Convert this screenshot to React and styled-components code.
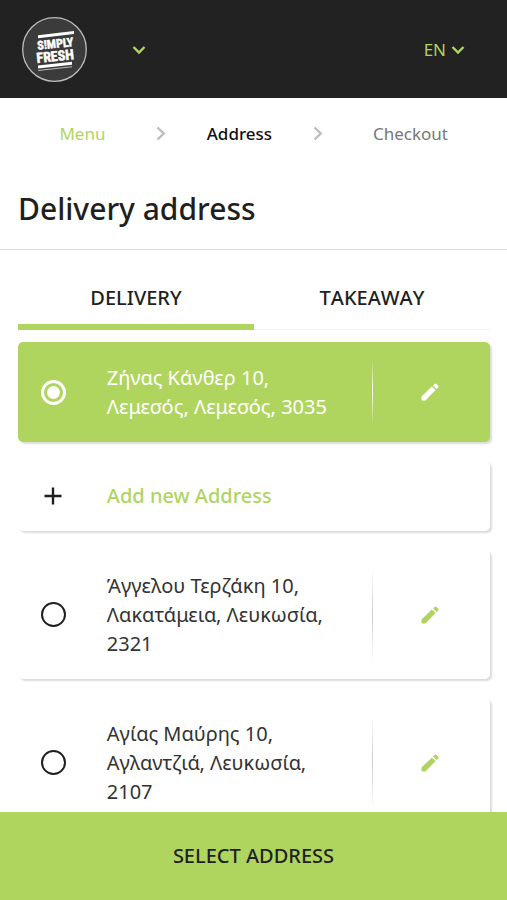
import React, { useState } from "react";
import styled, { createGlobalStyle } from "styled-components";

const green = "#b0d55f";
const ink = "#1f1f1f";

const GlobalStyle = createGlobalStyle`
  *, *::before, *::after { box-sizing: border-box; }
  body {
    margin: 0;
    background: #fff;
    color: ${ink};
    font-family: "Noto Sans", "Open Sans", sans-serif;
  }
  button, input { font: inherit; }
`;

const Page = styled.div`
  display: flex;
  flex-direction: column;
  height: 100vh;
`;

const Header = styled.header`
  display: flex;
  align-items: center;
  flex: none;
  padding: 17px 42px 16px 22px;
  background: #222;
`;

const HomeLink = styled.a`
  display: flex;
  margin-right: 45px;
`;

const HeaderButton = styled.button`
  display: flex;
  align-items: center;
  gap: 5px;
  padding: 0;
  border: 0;
  background: none;
  color: ${green};
  font-size: 17px;
  line-height: 24px;
  cursor: pointer;
`;

const Language = styled(HeaderButton)`
  margin-left: auto;
`;

const Steps = styled.nav`
  display: grid;
  grid-template-columns: 1fr 16px 1fr 16px 1.2fr;
  align-items: center;
  justify-items: center;
  flex: none;
  padding: 24px 12px 23px;
  font-size: 17px;
  line-height: 24px;
`;

const Step = styled.a`
  color: ${(p) => p.$color};
  font-weight: ${(p) => (p.$current ? 500 : 400)};
  text-decoration: none;
`;

const Title = styled.h1`
  flex: none;
  margin: 0;
  padding: 19px 18px 20px;
  border-bottom: 1px solid #ddd;
  font-size: 30px;
  font-weight: 500;
  line-height: 41px;
`;

const Content = styled.main`
  flex: 1;
  min-height: 0;
  padding: 17px 17px 18px 18px;
  overflow-y: auto;
  scrollbar-width: none;
`;

const Tabs = styled.div`
  display: grid;
  grid-template-columns: 1fr 1fr;
  margin-bottom: 12px;
  border-bottom: 1px solid #f1f1f1;
`;

const Tab = styled.button`
  margin-bottom: -1px;
  padding: 17px 0 12px;
  border: 0;
  border-bottom: 6px solid ${(p) => (p.$active ? green : "transparent")};
  background: none;
  color: ${ink};
  font-size: 20px;
  font-weight: 500;
  font-kerning: none;
  line-height: 28px;
  cursor: pointer;
`;

const List = styled.div`
  display: grid;
  gap: 19px;
`;

const Card = styled.div`
  display: grid;
  grid-template-columns: 15% 60% 25%;
  align-items: center;
  border-radius: 5px;
  background: ${(p) => (p.$selected ? green : "#fff")};
  color: ${(p) => (p.$selected ? "#fff" : "#333")};
  box-shadow: 2px 2px 2px rgba(0, 0, 0, 0.14);
`;

const AddCard = styled(Card).attrs({ as: "button", type: "button" })`
  width: 100%;
  padding: 20px 0;
  border: 0;
  color: ${green};
  text-align: left;
  cursor: pointer;
`;

const AddIcon = styled.svg`
  justify-self: center;
  color: ${ink};
`;

const AddLabel = styled.span`
  padding-left: 18px;
  font-size: 20px;
  font-weight: 500;
  line-height: 30px;
`;

const Radio = styled.input`
  display: grid;
  place-items: center;
  justify-self: center;
  width: 25px;
  height: 25px;
  margin: 0;
  appearance: none;
  border: 2px solid ${ink};
  border-radius: 50%;
  cursor: pointer;

  &:checked { border: 3px solid #fff; }
  &:checked::before {
    content: "";
    width: 13px;
    height: 13px;
    border-radius: 50%;
    background: #fff;
  }
`;

const AddressLabel = styled.label`
  padding: 21px 28px 21px 18px;
  font-size: 20px;
  line-height: 29px;
  cursor: pointer;
`;

const EditCell = styled.div`
  display: flex;
  align-self: stretch;
  padding: 18px 0;
`;

const Divider = styled.span`
  width: 1px;
  background: linear-gradient(
    transparent,
    ${(p) => (p.$selected ? "#fff" : "#ccc")} 50%,
    transparent
  );
`;

const EditButton = styled.button`
  display: flex;
  flex: 1;
  align-items: center;
  justify-content: center;
  padding: 0 3px 0 0;
  border: 0;
  background: none;
  color: ${(p) => (p.$selected ? "#fff" : green)};
  cursor: pointer;
`;

const Submit = styled.button`
  flex: none;
  padding: 30px 0;
  border: 0;
  background: ${green};
  color: ${ink};
  font-size: 20px;
  font-weight: 500;
  line-height: 28px;
  cursor: pointer;
`;

const LogoText = styled.text`
  font-family: "Roboto Condensed", "Liberation Sans", sans-serif;
  font-size: ${(p) => p.$size}px;
  font-weight: 700;
`;

const Logo = () => (
  <svg width="65" height="65" viewBox="0 0 65 65" role="img" aria-label="Simply Fresh">
    <circle cx="32.5" cy="32.5" r="31.8" fill="#3c3b3c" stroke="#bdbdbd" strokeWidth="1.3" />
    <g fill="#fff">
      <path d="M16 18.2 52 14v3L16 21.2z" />
      <path d="M16 48.5 50 44.7v3L16 51.5z" />
      <path d="M16 53 50 49.2v1L16 54z" opacity="0.65" />
      <g transform="rotate(-6 33 33)" textAnchor="middle" stroke="#fff" strokeWidth="0.5">
        <LogoText $size={12} x="34" y="31">S!MPLY</LogoText>
        <LogoText $size={14} x="32.5" y="44">FRESH</LogoText>
      </g>
    </g>
  </svg>
);

const Chevron = () => (
  <svg width="14" height="10" viewBox="0 0 14 10" fill="none" stroke="currentColor" strokeWidth="2.4" aria-hidden="true">
    <path d="M1.5 2 7 7.5 12.5 2" />
  </svg>
);

const Separator = () => (
  <svg width="10" height="16" viewBox="0 0 10 16" fill="none" stroke="#bdbdbd" strokeWidth="2.4" aria-hidden="true">
    <path d="M1.5 1.5 7.8 7.5 1.5 13.5" />
  </svg>
);

const Pencil = () => (
  <svg width="18" height="18" viewBox="0 0 18 18" fill="currentColor" aria-hidden="true">
    <path d="M.5 13.6 10.9 3.4l3.7 3.7L4.4 17.4H1.4a.9.9 0 0 1-.9-.9z" />
    <path d="m12 2.5 1.6-1.5a1.3 1.3 0 0 1 1.8 0l1.8 1.8a1.2 1.2 0 0 1 0 1.7l-1.6 1.6z" />
  </svg>
);

const addresses = [
  { id: "zinas", street: "Ζήνας Κάνθερ 10,", area: "Λεμεσός, Λεμεσός, 3035" },
  { id: "angelou", street: "Άγγελου Τερζάκη 10,", area: "Λακατάμεια, Λευκωσία, 2321" },
  { id: "agias", street: "Αγίας Μαύρης 10,", area: "Αγλαντζιά, Λευκωσία, 2107" },
];

const AddressCard = ({ address, selected, onSelect }) => (
  <Card $selected={selected}>
    <Radio type="radio" name="address" id={address.id} checked={selected} onChange={onSelect} />
    <AddressLabel htmlFor={address.id}>
      {address.street}
      <br />
      {address.area}
    </AddressLabel>
    <EditCell>
      <Divider $selected={selected} />
      <EditButton type="button" aria-label="Edit address" $selected={selected}>
        <Pencil />
      </EditButton>
    </EditCell>
  </Card>
);

export default function App() {
  const [selected, setSelected] = useState("zinas");
  const [tab, setTab] = useState("DELIVERY");
  const card = (a) => (
    <AddressCard key={a.id} address={a} selected={selected === a.id} onSelect={() => setSelected(a.id)} />
  );

  return (
    <Page>
      <GlobalStyle />
      <Header>
        <HomeLink href="#home">
          <Logo />
        </HomeLink>
        <HeaderButton type="button" aria-label="Choose store">
          <Chevron />
        </HeaderButton>
        <Language type="button">
          EN
          <Chevron />
        </Language>
      </Header>
      <Steps aria-label="Order steps">
        <Step href="#menu" $color={green}>Menu</Step>
        <Separator />
        <Step href="#address" $color="#111" $current aria-current="step">Address</Step>
        <Separator />
        <Step href="#checkout" $color="#777">Checkout</Step>
      </Steps>
      <Title>Delivery address</Title>
      <Content>
        <Tabs role="tablist">
          {["DELIVERY", "TAKEAWAY"].map((name) => (
            <Tab key={name} type="button" role="tab" aria-selected={tab === name} $active={tab === name} onClick={() => setTab(name)}>
              {name}
            </Tab>
          ))}
        </Tabs>
        <List>
          {card(addresses[0])}
          <AddCard>
            <AddIcon width="18" height="18" viewBox="0 0 18 18" stroke="currentColor" strokeWidth="2.4" aria-hidden="true">
              <path d="M9 0.5v17M0.5 9h17" />
            </AddIcon>
            <AddLabel>Add new Address</AddLabel>
          </AddCard>
          {addresses.slice(1).map(card)}
        </List>
      </Content>
      <Submit type="button">SELECT ADDRESS</Submit>
    </Page>
  );
}
